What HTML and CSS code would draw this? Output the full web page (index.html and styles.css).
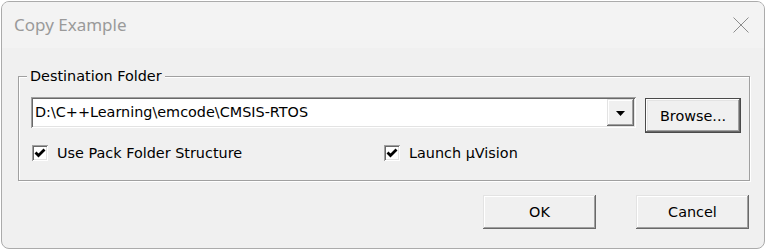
FILE: index.html
```html
<!DOCTYPE html>
<html lang="en">
<head>
    <meta charset="UTF-8">
    <title>Copy Example</title>
    <link rel="stylesheet" href="styles.css">
</head>
<body>
    <div class="window">
        <div class="titlebar">
            <span class="title">Copy Example</span>
            <svg class="close" width="16" height="16" viewBox="0 0 16 16">
                <path d="M0.5 0.5 L15.5 15.5 M15.5 0.5 L0.5 15.5" stroke="#8c8c8c" stroke-width="1" fill="none"/>
            </svg>
        </div>

        <div class="dialog">
            <fieldset class="group">
                <legend>Destination Folder</legend>
                <div class="path-row">
                    <div class="combo">
                        <span class="combo-text">D:\C++Learning\emcode\CMSIS-RTOS</span>
                        <span class="combo-btn">
                            <svg width="9" height="5" viewBox="0 0 9 5"><polygon points="0,0 9,0 4.5,5" fill="#000"/></svg>
                        </span>
                    </div>
                    <button class="btn btn-default">Browse...</button>
                </div>
                <div class="check-row">
                    <label class="check first">
                        <span class="box">
                            <svg width="16" height="16" viewBox="0 0 16 16"><polyline points="3.5,7.5 6.5,10.5 12.5,4.5" stroke="#000" stroke-width="2.8" fill="none"/></svg>
                        </span>
                        Use Pack Folder Structure
                    </label>
                    <label class="check">
                        <span class="box">
                            <svg width="16" height="16" viewBox="0 0 16 16"><polyline points="3.5,7.5 6.5,10.5 12.5,4.5" stroke="#000" stroke-width="2.8" fill="none"/></svg>
                        </span>
                        Launch µVision
                    </label>
                </div>
            </fieldset>

            <div class="actions">
                <button class="btn">OK</button>
                <button class="btn">Cancel</button>
            </div>
        </div>
    </div>
</body>
</html>
```

FILE: styles.css
```css
body {
    margin: 0;
    background-color: #fff;
    font-family: "DejaVu Sans", sans-serif;
    font-size: 14.4px;
    color: #000;
}
.window {
    margin: 1px 0 0 1px;
    width: 764px;
    height: 248px;
    box-sizing: border-box;
    border: 1px solid #ababab;
    border-radius: 8px;
    overflow: hidden;
    background-color: #f0f0f0;
    display: flex;
    flex-direction: column;
}
.titlebar {
    height: 46px;
    flex: none;
    display: flex;
    align-items: center;
    justify-content: space-between;
    padding: 0 15px 0 12px;
    background-color: #f3f3f3;
}
.title {
    font-family: "Noto Sans", sans-serif;
    font-size: 17px;
    color: #9a9a9a;
    margin-top: -1px;
}
.close {
    display: block;
    margin-top: -1px;
}
.dialog {
    flex: 1;
    padding: 20px 14px 0 16px;
}
.group {
    margin: 0;
    padding: 13px 8px 18px 12px;
    border: 1px solid #a0a0a0;
    box-shadow: inset 1px 1px #fff, 1px 1px #fff;
    min-width: 0;
}
.group legend {
    margin-left: -4px;
    padding: 0 3px;
    line-height: 16px;
    background-color: #f0f0f0;
}
.path-row {
    display: flex;
    align-items: flex-start;
    gap: 9px;
}
.combo {
    flex: 1;
    height: 31px;
    box-sizing: border-box;
    padding: 2px;
    display: flex;
    background-color: #fff;
    box-shadow: inset 1px 1px #a0a0a0, inset -1px -1px #fff, inset 2px 2px #696969, inset -2px -2px #e3e3e3;
}
.combo-text {
    flex: 1;
    padding-left: 2px;
    line-height: 27px;
    white-space: nowrap;
}
.combo-btn {
    width: 27px;
    display: flex;
    align-items: center;
    justify-content: center;
    background-color: #f0f0f0;
    box-shadow: inset -1px -1px #696969, inset 1px 1px #e3e3e3, inset -2px -2px #a0a0a0, inset 2px 2px #fff;
}
.combo-btn svg {
    display: block;
    margin: 1px 0 0 -1px;
}
.btn {
    width: 113px;
    height: 34px;
    padding: 0;
    border: none;
    font-family: "DejaVu Sans", sans-serif;
    font-size: 14.4px;
    color: #000;
    background-color: #f0f0f0;
    box-shadow: inset -1px -1px #696969, inset 1px 1px #e3e3e3, inset -2px -2px #a0a0a0, inset 2px 2px #fff;
}
.btn-default {
    width: 96px;
    height: 35px;
    margin-top: 1px;
    box-shadow: inset 0 0 0 1px #4a4a4a, inset -2px -2px #696969, inset 2px 2px #fff, inset -3px -3px #a0a0a0, inset 3px 3px #e3e3e3;
}
.check-row {
    display: flex;
    margin-top: 11px;
    height: 18px;
}
.check {
    display: flex;
    align-items: center;
    gap: 9px;
    white-space: nowrap;
}
.check.first {
    width: 352px;
}
.box {
    width: 16px;
    height: 16px;
    margin-left: 1px;
    background-color: #fff;
    box-shadow: inset 1px 1px #a0a0a0, inset -1px -1px #fff, inset 2px 2px #696969, inset -2px -2px #e3e3e3;
}
.box svg {
    display: block;
}
.actions {
    display: flex;
    justify-content: flex-end;
    gap: 40px;
    margin: 14px 1px 0 0;
}
```
